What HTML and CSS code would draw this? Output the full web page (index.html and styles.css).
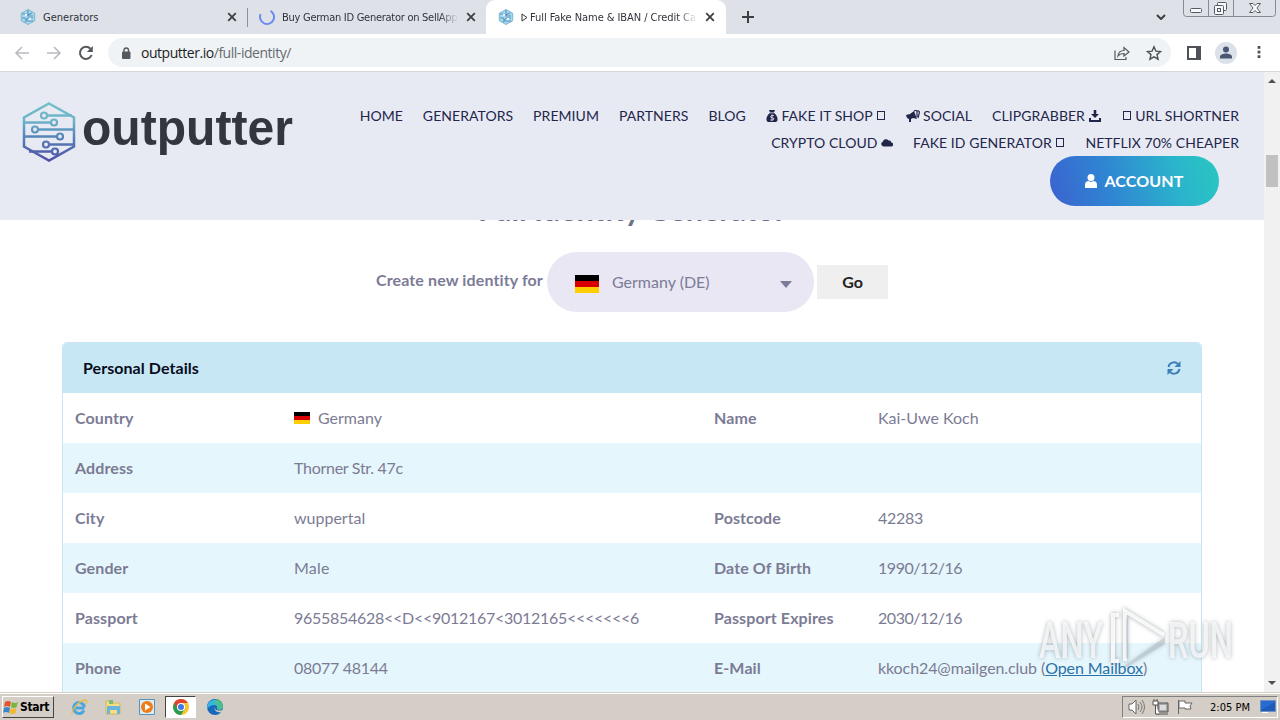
FILE: index.html
```html
<!DOCTYPE html>
<html lang="en">
<head>
<meta charset="utf-8">
<title>Full Fake Name &amp; IBAN</title>
<link rel="stylesheet" href="styles.css">
</head>
<body>
<svg class="defs" width="0" height="0">
  <defs>
    <linearGradient id="lg" gradientUnits="userSpaceOnUse" x1="0" y1="2" x2="0" y2="60"><stop offset="0" stop-color="#72bfc9"/><stop offset=".3" stop-color="#6cb4c8"/><stop offset=".6" stop-color="#5481b8"/><stop offset="1" stop-color="#504fa6"/></linearGradient>
    <symbol id="fav" viewBox="0 0 16 16"><path d="M8 .5l6.7 3.7v7.6L8 15.5 1.3 11.8V4.200z" fill="#a8d5ea" stroke="#7bb8d2"/><path d="M2 5h4l2 2h5M2 9h3l2 3h6M8 1v5l4-2M5 13l3-4h5" fill="none" stroke="#5795c4" stroke-width="1.100"/><circle cx="6" cy="6" r="1.300" fill="#dff5fb"/><circle cx="10" cy="10" r="1.300" fill="#dff5fb"/></symbol>
    <symbol id="x" viewBox="0 0 10 10"><path d="M1.200 1.200l7.600 7.600M8.800 1.200L1.200 8.800" stroke="#3c4043" stroke-width="1.800"/></symbol>
    <symbol id="de" viewBox="0 0 24 18" preserveAspectRatio="none"><path fill="#000" d="M0 0h24v6H0z"/><path fill="#d80000" d="M0 6h24v6H0z"/><path fill="#ffce00" d="M0 12h24v6H0z"/></symbol>
  </defs>
</svg>
<div class="screen">
  <div class="tabs">
    <div class="tab t1"><svg class="fav"><use href="#fav"/></svg><span class="tt">Generators</span><svg class="x"><use href="#x"/></svg></div>
    <div class="tab t2"><svg class="fav" viewBox="0 0 16 16"><path d="M11.500 1.900A7 7 0 1 1 1.600 5.200" fill="none" stroke="#6b8cf0" stroke-width="2"/></svg><span class="tt fade">Buy German ID Generator on SellApp</span><svg class="x"><use href="#x"/></svg></div>
    <div class="tab t3"><svg class="fav"><use href="#fav"/></svg><span class="tt fade"><svg class="tri" viewBox="0 0 7 9"><path d="M1 1v7l5-3.500z" fill="none" stroke="#333"/></svg>Full Fake Name &amp; IBAN / Credit Ca</span><svg class="x"><use href="#x"/></svg></div>
    <svg class="plus" viewBox="0 0 12 12"><path d="M6 0v12M0 6h12" stroke="#3c4043" stroke-width="2"/></svg>
    <svg class="chev" viewBox="0 0 10 6"><path d="M1 1l4 4 4-4" fill="none" stroke="#3c4043" stroke-width="2"/></svg>
    <svg class="win" viewBox="0 0 94 17"><path d="M.5 0v13.500q0 3 3 3h86q3 0 3-3V0M25.500 0v16M50.500 0v16" fill="none" stroke="#858a94"/><g fill="#f8f9fb" stroke="#555b66"><rect x="7.500" y="8.500" width="11" height="4" rx="1"/><rect x="34.500" y="2.500" width="9" height="8" rx="1"/><rect x="31.500" y="5.500" width="9" height="9" rx="1"/><rect x="34.500" y="8.500" width="3" height="3"/><path d="M66.500 3.500h3.500l2 2 2-2h3.500l-3.500 4.500 3.500 4.500h-3.500l-2-2-2 2h-3.500l3.500-4.500z"/></g></svg>
  </div>
  <div class="toolbar">
    <svg class="nav" viewBox="0 0 16 16"><path d="M15 8H2M8 2L2 8l6 6" fill="none" stroke="#b9bbbe" stroke-width="1.600"/></svg>
    <svg class="nav" viewBox="0 0 16 16"><path d="M1 8h13M8 2l6 6-6 6" fill="none" stroke="#b9bbbe" stroke-width="1.600"/></svg>
    <svg class="nav" viewBox="0 0 16 16"><path d="M13.600 10A6 6 0 1 1 12.400 3.800" fill="none" stroke="#55585c" stroke-width="2"/><path d="M14.800 1v6h-6z" fill="#55585c"/></svg>
    <div class="omni">
      <svg class="lock" viewBox="0 0 10 12"><rect x="1" y="4.500" width="8.500" height="7.500" rx="1" fill="#55585c"/><path d="M3 5V3.300a2.250 2.250 0 0 1 4.500 0V5" fill="none" stroke="#55585c" stroke-width="1.400"/></svg>
      <span class="url"><b>outputter.io</b>/full-identity/</span>
      <svg class="share" viewBox="0 0 16 16"><path d="M1 5.500v9h11v-2.500M4 11c.5-4 3-5.500 6-5.500V2.500L15 7l-5 4V8.500C7 8.500 5.500 9 4 11z" fill="none" stroke="#55585c" stroke-width="1.200"/></svg>
      <svg class="star" viewBox="0 0 16 16"><path d="M8 1.800l1.900 4.300 4.700.4-3.600 3.100 1.100 4.600L8 11.800l-4.100 2.400L5 9.600 1.400 6.500l4.700-.4z" fill="none" stroke="#4e5256" stroke-width="1.400"/></svg>
    </div>
    <svg class="side" viewBox="0 0 14 14"><path d="M1 1h12v12H1z" fill="#fff" stroke="#4e5256" stroke-width="2"/><path d="M9 1h4v12H9z" fill="#4e5256"/></svg>
    <svg class="ava" viewBox="0 0 22 22"><circle cx="11" cy="11" r="11" fill="#dbe1e8"/><circle cx="11" cy="7.500" r="3" fill="#4b5672"/><path d="M5 16.500v-1.800c0-2 3.500-3.200 6-3.200s6 1.200 6 3.200v1.800z" fill="#4b5672"/></svg>
    <svg class="dots" viewBox="0 0 4 14"><g fill="#4e5256"><rect x=".5" y="0" width="3" height="3"/><rect x=".5" y="5" width="3" height="3"/><rect x=".5" y="10" width="3" height="3"/></g></svg>
  </div>
  <div class="view">
    <div class="page">
      <header class="head">
        <div class="logo">
          <svg class="hex" viewBox="0 0 54 62"><g fill="none" stroke="url(#lg)" stroke-width="2.500"><path d="M27 2.500L52 16.500v29L27 59.500 2 45.500v-29z"/><path d="M25 14.500h25M2 21.500h26M17 28.500h35M2 35.500h32M27 43.500h25M7 50.500h22"/></g><g fill="#e8eaf3" stroke="url(#lg)" stroke-width="2.200"><circle cx="22" cy="14.500" r="3"/><circle cx="32" cy="21.500" r="3"/><circle cx="13" cy="28.500" r="3"/><circle cx="38" cy="35.500" r="3"/><circle cx="24" cy="43.500" r="3"/><circle cx="33" cy="50.500" r="3"/></g></svg>
          <span class="brand">outputter</span>
        </div>
        <div class="right">
          <nav class="menu">
            <a>HOME</a><a>GENERATORS</a><a>PREMIUM</a><a>PARTNERS</a><a>BLOG</a>
            <a><svg class="ic bag" viewBox="0 0 12 12"><path d="M3 0h6L8 2.500H4zM3.500 3.200h5C10.500 5 12 7.500 11.500 10c-.3 1.500-1 2-2.500 2H3C1.500 12 .8 11.500.5 10 0 7.500 1.500 5 3.500 3.200z" fill="#22264b"/><path d="M8 5.500H5.500L4.500 7 8 8.500 7 10H4.300M6 4.500v6.500" fill="none" stroke="#e8eaf3" stroke-width=".8"/></svg> FAKE IT SHOP <i class="tofu"></i></a>
            <a><svg class="ic horn" viewBox="0 0 14 12"><path d="M0 5l4-1 4-3 3 8-4-1-2 1v3H3V9L1 8z" fill="#22264b"/><path d="M8 1c2-1 3-.5 3 1v5M11 1c2-.5 2.500.5 2.300 2L12 8" fill="none" stroke="#22264b" stroke-width="1.200"/></svg>SOCIAL</a>
            <a class="clip">CLIPGRABBER <svg class="ic" viewBox="0 0 12 12"><path d="M4.700 0h2.600v4H10L6 8 2 4h2.700zM0 8h2v2h8V8h2v4H0z" fill="#22264b"/></svg></a>
            <a><i class="tofu"></i> URL SHORTNER</a>
          </nav>
          <nav class="menu row2">
            <a>CRYPTO CLOUD <svg class="ic" viewBox="0 0 12 12"><path d="M2.500 9.500A2.500 2.500 0 0 1 1.800 4.700 3.200 3.200 0 0 1 7.500 3.500 2.300 2.300 0 0 1 10.300 5.500 2 2 0 0 1 10 9.500z" fill="#22264b"/></svg></a>
            <a>FAKE ID GENERATOR <i class="tofu"></i></a><a>NETFLIX 70% CHEAPER</a>
          </nav>
          <a class="account"><svg viewBox="0 0 12 14"><circle cx="6" cy="3.500" r="3.500" fill="#fff"/><path d="M0 14v-3.500C0 8 2 7 3.500 7l2.500 1 2.500-1C10 7 12 8 12 10.500V14z" fill="#fff"/></svg><span>ACCOUNT</span></a>
        </div>
      </header>
      <main>
        <h1>Full Identity Generator</h1>
        <div class="form">
          <label>Create new identity for</label>
          <div class="select"><svg class="flag"><use href="#de"/></svg><span>Germany (DE)</span><svg class="caret" viewBox="0 0 12 7"><path d="M0 0h12L6 7z" fill="#7c7b98"/></svg></div>
          <button>Go</button>
        </div>
        <section class="card">
          <div class="cardhead"><span>Personal Details</span><svg viewBox="0 0 14 14"><path d="M1.500 6A5.500 5.500 0 0 1 11 3.200M12.500 8A5.500 5.500 0 0 1 3 10.800" fill="none" stroke="#3b80b8" stroke-width="2"/><path d="M13.500 0v6h-6zM.5 14V8h6z" fill="#3b80b8"/></svg></div>
          <div class="row"><b>Country</b><span><svg class="mini"><use href="#de"/></svg>Germany</span><b>Name</b><span>Kai-Uwe Koch</span></div>
          <div class="row alt"><b>Address</b><span class="num">Thorner Str. 47c</span></div>
          <div class="row"><b>City</b><span>wuppertal</span><b>Postcode</b><span class="num">42283</span></div>
          <div class="row alt"><b>Gender</b><span class="male">Male</span><b>Date Of Birth</b><span class="date">1990/12/16</span></div>
          <div class="row"><b>Passport</b><span class="num">9655854628&lt;&lt;D&lt;&lt;9012167&lt;3012165&lt;&lt;&lt;&lt;&lt;&lt;&lt;6</span><b>Passport Expires</b><span class="date">2030/12/16</span></div>
          <div class="row alt"><b>Phone</b><span class="num">08077 48144</span><b>E-Mail</b><span class="mail">kkoch24@mailgen.club (<a>Open Mailbox</a>)</span></div>
        </section>
      </main>
    </div>
    <div class="scroll"><svg viewBox="0 0 8 4"><path d="M0 4h8L4 0z" fill="#505050"/></svg><i class="thumb"></i><svg viewBox="0 0 8 4"><path d="M0 0h8L4 4z" fill="#505050"/></svg></div>
    <svg class="mark" viewBox="0 0 200 64"><g font-family="Roboto" font-size="50" font-weight="500" fill="#fff" fill-opacity=".75"><text x="2" y="53" textLength="64" lengthAdjust="spacingAndGlyphs">ANY</text><text x="131" y="53" textLength="65" lengthAdjust="spacingAndGlyphs">RUN</text></g><g fill="none" stroke="#fff" stroke-opacity=".85" stroke-width="4"><path d="M82 10h-6v46h6M88 56V6l39 24"/></g><path d="M86 62l42-30v7L90 62zM91 14v38l-2 2V12z" fill="#aebbc2" opacity=".45"/></svg>
  </div>
  <div class="task">
    <div class="start"><svg viewBox="0 0 16 16"><path d="M2 3q3-2 6 0L7 8Q4 6 1 8z" fill="#e4552b"/><path d="M9 3q3 2 6 0l-1.500 5q-3 2-5.500 0z" fill="#79b63c"/><path d="M1 9q3-2 6 0l-1 5q-3-2-6 0z" fill="#3d85cc"/><path d="M8 9q2.500 2 5.500 0l-1 5q-3 2-6 0z" fill="#f2b929"/></svg>Start</div>
    <div class="app"><svg viewBox="0 0 18 18"><path d="M14.500 10H5.500M14 12.500A5.500 5.500 0 1 1 14.500 9" fill="none" stroke="#49a6df" stroke-width="3"/><path d="M2.500 16C0 14 8 3 15 2q3 0 1 4" fill="none" stroke="#e8bd45" stroke-width="1.300"/></svg></div>
    <div class="app"><svg viewBox="0 0 18 18"><path d="M2 3h6l1 2h7v11H2z" fill="#f5dd86" stroke="#d4b75d"/><path d="M3 8h13v8h-3v-4H6v4H3z" fill="#69b5de"/><path d="M5 2h4v4H5z" fill="#79bd76"/></svg></div>
    <div class="app"><svg viewBox="0 0 18 18"><path d="M1.500 1.500h15v15h-15z" fill="#d9edf8" stroke="#5794bd"/><circle cx="9" cy="9" r="6" fill="#f17b16"/><path d="M7 5.500v7L12.500 9z" fill="#fff"/></svg></div>
    <div class="app on"><svg viewBox="0 0 18 18"><circle cx="9" cy="9" r="8" fill="#f7c52b"/><path d="M9 9L2.100 5A8 8 0 0 0 9 17l3.500-6z" fill="#299c50"/><path d="M9 9V5h6.900A8 8 0 0 0 2.100 5L5.500 11z" fill="#df4332"/><circle cx="9" cy="9" r="4" fill="#fff"/><circle cx="9" cy="9" r="3" fill="#397be6"/></svg></div>
    <div class="app"><svg viewBox="0 0 18 18"><circle cx="9" cy="9" r="8" fill="#1669bb"/><path d="M1.200 8A8 8 0 0 1 17 9c0 3-5 3.500-6 2 1-2-.5-4-3-4S3 8 1.200 11z" fill="#35b8e0"/><path d="M10 1c4 0 7 4 7 8 0 3-5 3.500-6 2 1-3-1-5-3-6z" fill="#5bc64f" opacity=".55"/><path d="M8.500 8.500C8 12 12 13.500 17 12l1 1.800-2 .5c-5 .7-8.500-2-7.500-5.800z" fill="#d5cec6"/></svg></div>
    <div class="tray">
      <svg viewBox="0 0 18 16"><path d="M1 5h3l4-4v14l-4-4H1z" fill="#fff" stroke="#666"/><path d="M10 5q2 3 0 6M12 3q4 5 0 10M14 1q5 7 0 14" fill="none" stroke="#777"/></svg>
      <svg viewBox="0 0 18 16"><path d="M6 4h10v9H6zM4 15h12" fill="#aaa" stroke="#555"/><path d="M8 6h6v5H8z" fill="#ddd"/><path d="M1 2v4h5V2zM2 0v2M5 0v2M3.500 6v9h4" fill="#fff" stroke="#555"/></svg>
      <svg viewBox="0 0 18 16"><path d="M2.500 15V1M3 2h6v2h7l-2 3 1 3H9V9H3z" fill="#fff" stroke="#666"/></svg>
      <span>2:05 PM</span>
      <svg class="desk" viewBox="0 0 16 14"><path d="M.5.5h15v11H.5z" fill="#286bd0" stroke="#7291bd"/><path d="M1 10L15 2v9H1z" fill="#1f5cba"/><path d="M2 12h6v1H2z" fill="#fff"/></svg>
    </div>
  </div>
</div>
</body>
</html>
```
FILE: styles.css
```css
* { box-sizing: border-box; }
body { margin: 0; overflow: hidden; font-family: Lato, sans-serif; }
svg { display: block; flex: none; }
.defs { position: absolute; }
.screen { width: 1280px; height: 720px; display: flex; flex-direction: column; background: #fff; }
.tabs { height: 34px; background: #dee1e8; display: flex; align-items: center; font: 11px "DejaVu Sans Condensed", "DejaVu Sans", sans-serif; font-stretch: condensed; color: #30333a; }
.tab { height: 34px; display: flex; align-items: center; }
.t1 { width: 248px; padding-left: 20px; padding-right: 11px; position: relative; }
.t1::after { content: ""; position: absolute; right: 0; top: 8px; width: 1px; height: 19px; background: #8c9098; }
.t2 { width: 238px; padding-left: 11px; padding-right: 10px; border-radius: 0 0 8px 0; }
.t3 { width: 240px; padding-left: 12px; padding-right: 11px; background: #fff; border-radius: 9px 9px 0 0; }
.fav { width: 16px; height: 16px; margin-right: 7px; }
.tt { flex: 1; white-space: nowrap; overflow: hidden; display: flex; align-items: center; }
.fade { margin-right: 6px; letter-spacing: -.27px; -webkit-mask-image: linear-gradient(90deg, #000 88%, transparent 99%); mask-image: linear-gradient(90deg, #000 88%, transparent 99%); }
.t3 .fade { letter-spacing: -.06px; }
.tri { width: 7px; height: 9px; margin-right: 2px; }
.x { width: 10px; height: 10px; }
.plus { width: 12px; height: 12px; margin-left: 16px; }
.chev { width: 10px; height: 6px; margin-left: auto; }
.win { width: 94px; height: 17px; margin: 0 3px 0 17px; align-self: flex-start; }
.toolbar { height: 38px; border-bottom: 1px solid #d6d7d9; display: flex; align-items: center; padding-left: 14px; }
.nav { width: 16px; height: 16px; margin-right: 16px; }
.omni { height: 29px; width: 1063px; margin-left: -2px; border-radius: 15px; background: #f0f3f6; display: flex; align-items: center; padding: 0 9px 0 13px; }
.lock { width: 10px; height: 12px; margin-right: 10px; }
.url { font: 14px "Open Sans", sans-serif; letter-spacing: -.47px; color: #676b70; flex: 1; }
.url b { font-weight: 400; color: #1d1f22; }
.share { width: 16px; height: 16px; margin-right: 16px; }
.star { width: 16px; height: 16px; }
.side { width: 14px; height: 14px; margin-left: 16px; }
.ava { width: 22px; height: 22px; margin-left: 14px; }
.dots { width: 4px; height: 13px; margin-left: 20px; }
.view { height: 620px; display: flex; position: relative; overflow: hidden; }
.page { width: 1264px; height: 620px; overflow: hidden; }
.head { height: 148px; background: #e8eaf3; position: relative; z-index: 1; display: flex; justify-content: space-between; padding: 0 25px 0 22px; }
.logo { display: flex; padding-top: 29px; }
.hex { width: 54px; height: 62px; }
.brand { width: 212px; font: bold 50px/54px "Liberation Sans", sans-serif; color: #32363f; margin: 0 0 0 6px; transform: scaleX(.961); transform-origin: 0 0; height: 54px; }
.right { padding-top: 30px; display: flex; flex-direction: column; align-items: flex-end; }
.menu { display: flex; gap: 20px; height: 27px; font-size: 14px; line-height: 27px; letter-spacing: .05px; color: #22264b; white-space: pre; }
.menu a { display: flex; align-items: center; }
.menu .clip { margin-right: 1px; }
.ic { width: 12px; height: 12px; }
.horn { width: 14px; margin-right: 3px; }
.tofu { width: 8px; height: 9px; border: 1px solid #22264b; margin: 0 1px; }
.account { width: 169px; height: 50px; border-radius: 25px; margin: 0 20px 0 0; background: linear-gradient(75deg, #3b62d0, #2f85d2 35%, #2bb5cc 75%, #28c7c0); display: flex; align-items: center; justify-content: center; gap: 7px; color: #fff; font-size: 16px; font-weight: 700; }
.account span { padding-bottom: 1px; letter-spacing: .15px; }
.account svg { width: 12px; height: 14px; }
main { padding: 0 62px; }
h1 { margin: -34px 0 0; text-align: center; height: 48px; font-size: 30.6px; line-height: 48px; color: #6c7186; }
.form { height: 60px; margin-top: 18px; display: flex; align-items: center; justify-content: center; color: #7c7b98; font-size: 16px; }
label { font-weight: 700; width: 167px; letter-spacing: .12px; white-space: nowrap; margin-right: 4px; padding-bottom: 6px; }
.select { width: 267px; height: 60px; border-radius: 30px; background: #e8e7f3; display: flex; align-items: center; padding: 0 22px 0 28px; }
.select span { flex: 1; margin-left: 13px; padding-bottom: 2px; }
.flag { width: 24px; height: 18px; margin-top: 3px; }
.caret { width: 12px; height: 7px; margin-top: 4px; }
button { width: 71px; height: 34px; margin-left: 3px; padding-bottom: 3px; border: 0; background: #efefef; color: #222; font: 700 16px Lato, sans-serif; }
.card { margin-top: 30px; width: 1140px; border: 1px solid #c8e6f3; border-radius: 5px 5px 0 0; height: 380px; color: #7c7b94; font-size: 16px; overflow: hidden; }
.cardhead { height: 50px; background: #c8e7f5; display: flex; align-items: center; justify-content: space-between; padding: 0 20px; color: #080c1c; font-size: 16px; font-weight: 700; }
.cardhead span { padding-bottom: 2px; letter-spacing: .06px; }
.cardhead svg { width: 14px; height: 14px; }
.row { height: 50px; display: grid; grid-template-columns: 219px 420px 164px 1fr; align-items: center; padding: 0 0 2px 12px; white-space: nowrap; }
.row span { display: flex; align-items: center; white-space: pre; }
.row b { letter-spacing: .1px; }
.row .num { letter-spacing: -.28px; }
.row .date { letter-spacing: -.45px; }
.row .mail { letter-spacing: -.09px; }
.row .male { letter-spacing: .2px; }
.alt { background: #e5f6fc; }
.mini { width: 16px; height: 12px; margin: 2px 8px 0 0; }
.row a { color: #2a71a8; text-decoration: underline; }
.scroll { width: 16px; background: #f1f1f1; display: flex; flex-direction: column; align-items: center; justify-content: space-between; padding: 7px 0; }
.scroll svg { width: 8px; height: 4px; }
.thumb { width: 12px; height: 32px; background: #c1c1c1; margin-bottom: 423px; }
.mark { position: absolute; left: 1037px; top: 533px; width: 200px; height: 64px; filter: drop-shadow(0 0 2px rgba(80, 90, 100, .6)); }
.task { height: 28px; background: #d5cec6; border-top: 1px solid #d5cec6; box-shadow: inset 0 1px #fff; display: flex; align-items: center; padding: 1px 2px 0; }
.start { width: 52px; height: 22px; border: 1px solid; border-color: #fff #444 #444 #fff; display: flex; align-items: center; font: bold 12px "DejaVu Sans Condensed", sans-serif; color: #000; margin-right: 9px; letter-spacing: -.3px; }
.start svg { width: 16px; height: 16px; margin-right: 1px; }
.app { width: 31px; height: 22px; margin-right: 3px; display: flex; align-items: center; justify-content: center; }
.app svg { width: 18px; height: 18px; }
.on { background: #fff; border: 1px solid; border-color: #444 #fff #fff #444; }
.tray { margin-left: auto; width: 156px; height: 22px; border: 1px solid; border-color: #808080 #fff #fff #808080; display: flex; align-items: center; padding: 0 1px 0 5px; font: 11px "DejaVu Sans Condensed", sans-serif; color: #000; }
.tray svg { width: 18px; height: 16px; margin-right: 6px; }
.tray span { margin: 0 auto; white-space: nowrap; }
.tray .desk { width: 16px; height: 14px; margin-right: 0; }
```
